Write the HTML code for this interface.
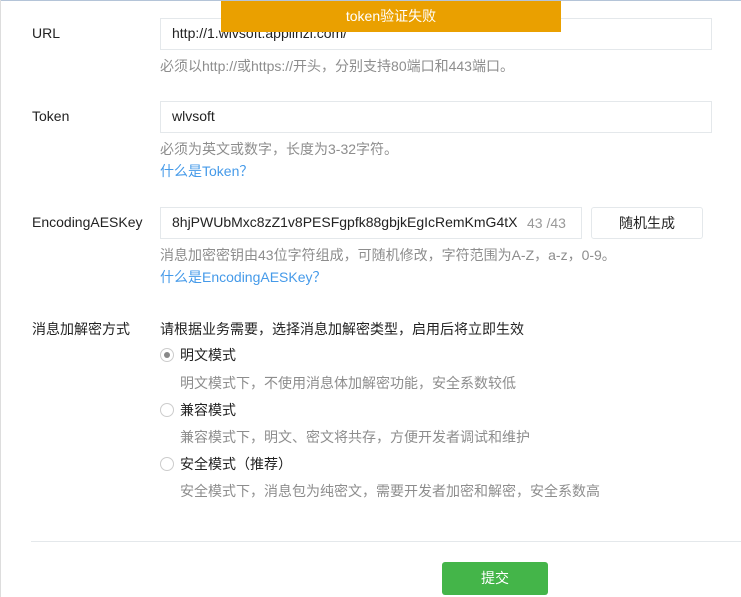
<!DOCTYPE html>
<html><head><meta charset="utf-8"><style>
*{margin:0;padding:0;box-sizing:border-box}
body{width:741px;height:597px;overflow:hidden;background:#fff;font-family:"Liberation Sans","Noto Sans CJK SC",sans-serif;font-size:14px;color:#222;position:relative;}
.a{position:absolute;white-space:nowrap;line-height:20px}
.lbl{left:32px}
.hint{color:#8d8d8d;font-size:14px}
.link{color:#459ae9;font-size:14px}
.inp{position:absolute;border:1px solid #e4e8eb;background:#fff;padding-left:11px;line-height:29px;font-size:14px;color:#222;overflow:hidden;white-space:nowrap}
.radio{position:absolute;left:160px;width:14px;height:14px;border:1px solid #ccc;border-radius:50%;background:#fff}
</style></head><body>
<div style="position:absolute;left:0;top:0;width:741px;height:1px;background:#b4c4d8"></div>
<div style="position:absolute;left:0;top:0;width:1px;height:597px;background:#ddd"></div>

<div class="a lbl" style="top:23px">URL</div>
<div class="inp" style="left:160px;top:18px;width:552px;height:32px">http://1.wlvsoft.applinzi.com/</div>
<div class="a hint" style="left:160px;top:56px">必须以http://或https://开头，分别支持80端口和443端口。</div>

<div class="a lbl" style="top:106px">Token</div>
<div class="inp" style="left:160px;top:101px;width:552px;height:32px">wlvsoft</div>
<div class="a hint" style="left:160px;top:139px">必须为英文或数字，长度为3-32字符。</div>
<div class="a link" style="left:160px;top:161px">什么是Token？</div>

<div class="a lbl" style="top:212px">EncodingAESKey</div>
<div class="inp" style="left:160px;top:207px;width:422px;height:32px"><span style="display:inline-block;width:349px;overflow:hidden;vertical-align:top">8hjPWUbMxc8zZ1v8PESFgpfk88gbjkEgIcRemKmG4tX</span></div>
<div class="a" style="left:527px;top:213px;color:#999">43 /43</div>
<div style="position:absolute;left:591px;top:207px;width:112px;height:32px;border:1px solid #e4e8eb;border-radius:3px;text-align:center;line-height:30px">随机生成</div>
<div class="a hint" style="left:160px;top:245px">消息加密密钥由43位字符组成，可随机修改，字符范围为A-Z，a-z，0-9。</div>
<div class="a link" style="left:160px;top:267px">什么是EncodingAESKey？</div>

<div class="a lbl" style="top:319px">消息加解密方式</div>
<div class="a" style="left:160px;top:319px">请根据业务需要，选择消息加解密类型，启用后将立即生效</div>
<div class="radio" style="top:348px"><div style="position:absolute;left:3px;top:3px;width:6px;height:6px;border-radius:50%;background:#888"></div></div>
<div class="a" style="left:180px;top:345px">明文模式</div>
<div class="a hint" style="left:180px;top:373px">明文模式下，不使用消息体加解密功能，安全系数较低</div>
<div class="radio" style="top:403px"></div>
<div class="a" style="left:180px;top:400px">兼容模式</div>
<div class="a hint" style="left:180px;top:427px">兼容模式下，明文、密文将共存，方便开发者调试和维护</div>
<div class="radio" style="top:457px"></div>
<div class="a" style="left:180px;top:454px">安全模式（推荐）</div>
<div class="a hint" style="left:180px;top:481px">安全模式下，消息包为纯密文，需要开发者加密和解密，安全系数高</div>

<div style="position:absolute;left:31px;top:541px;width:710px;height:1px;background:#e4e8eb"></div>
<div style="position:absolute;left:442px;top:562px;width:106px;height:33px;background:#44b549;border-radius:3px;color:#fff;text-align:center;line-height:33px">提交</div>

<div style="position:absolute;left:221px;top:1px;width:340px;height:31px;background:#eaa000;color:#fff;text-align:center;line-height:31px">token验证失败</div>
</body></html>
